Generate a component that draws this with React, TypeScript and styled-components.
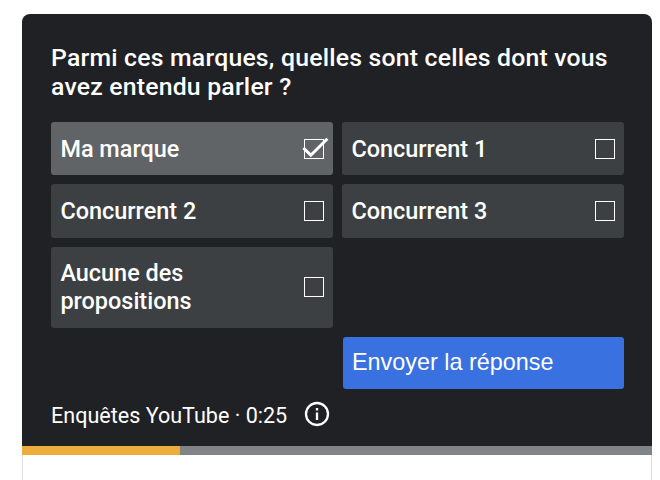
import React, { useState } from "react";
import styled, { createGlobalStyle } from "styled-components";

const GlobalStyle = createGlobalStyle`
  *, *::before, *::after { box-sizing: border-box; }
  html, body { margin: 0; height: 480px; overflow: hidden; background: #fff; }
`;

const Page = styled.main`
  width: 660px;
  height: 480px;
  padding: 14px 8px 0 22px;
  display: flex;
  flex-direction: column;
  font-family: Roboto, "Liberation Sans", sans-serif;
  color: #fff;
`;

const Card = styled.section`
  height: 432px;
  padding: 29px 28px 0 29px;
  display: flex;
  flex-direction: column;
  background: #202124;
  border-radius: 8px 8px 0 0;
`;

const Question = styled.h1`
  margin: 0;
  height: 79px;
  font-size: 24.8px;
  font-weight: 500;
  line-height: 29px;
  letter-spacing: 0.2px;
  white-space: nowrap;
`;

const Answers = styled.div`
  display: grid;
  grid-template-columns: 282px 282px;
  grid-template-rows: 53px 54px 81px 52px;
  gap: 9px;
`;

const Answer = styled.button<{ $selected: boolean; $tall: boolean }>`
  display: flex;
  align-items: center;
  justify-content: space-between;
  padding: 0 9px ${(p) => (p.$tall ? 1 : 0)}px 9.4px;
  border: 0;
  border-radius: 3px;
  background: ${(p) => (p.$selected ? "#606466" : "#3c4042")};
  color: #fff;
  font: 500 23.45px/28px Roboto, "Liberation Sans", sans-serif;
  text-align: left;
`;

const AnswerLabel = styled.span`
  white-space: pre-line;
`;

const Box = styled.span`
  position: relative;
  flex: none;
  width: 20px;
  height: 20px;
  border: 1px solid #fff;
`;

const Check = styled.svg`
  position: absolute;
  left: -3px;
  top: -3px;
  width: 28px;
  height: 24px;
`;

const Submit = styled.button`
  grid-column: 2;
  grid-row: 4;
  margin-left: 1px;
  padding: 0 9px 2px;
  border: 0;
  border-radius: 3px;
  background: #3971e0;
  color: #fff;
  font: 400 23.4px/28px "Liberation Sans", Arial, sans-serif;
  text-align: left;
`;

const Footer = styled.footer`
  display: flex;
  align-items: center;
  height: 30px;
  margin-top: 11px;
  font-size: 21.55px;
`;

const InfoIcon = styled.svg`
  width: 26px;
  height: 26px;
  margin: -3px 0 0 16.6px;
`;

const Progress = styled.div`
  height: 9px;
  background: #808486;
`;

const Elapsed = styled.div`
  width: 158px;
  height: 9px;
  background: #edad3c;
  border-radius: 0 1px 1px 0;
`;

const Below = styled.div`
  flex: 1;
  border: solid #dadce0;
  border-width: 0 1px;
`;

const answers = [
  "Ma marque",
  "Concurrent 1",
  "Concurrent 2",
  "Concurrent 3",
  "Aucune des\npropositions",
];

export default function App() {
  const [selected, setSelected] = useState(answers[0]);
  return (
    <Page>
      <GlobalStyle />
      <Card>
        <Question>
          Parmi ces marques, quelles sont celles dont vous
          <br />
          avez entendu parler ?
        </Question>
        <Answers>
          {answers.map((text) => (
            <Answer
              key={text}
              $selected={text === selected}
              $tall={text.includes("\n")}
              onClick={() => setSelected(text)}
            >
              <AnswerLabel>{text}</AnswerLabel>
              <Box>
                {text === selected && (
                  <Check viewBox="0 0 28 24" fill="none" stroke="#fff" strokeWidth="3">
                    <path d="M1.4 11 8.8 18.2 25.4 1.8" />
                  </Check>
                )}
              </Box>
            </Answer>
          ))}
          <Submit>Envoyer la réponse</Submit>
        </Answers>
        <Footer>
          Enquêtes YouTube · 0:25
          <InfoIcon viewBox="0 0 26 26" fill="none">
            <circle cx="13" cy="13" r="11" stroke="#fff" strokeWidth="2.3" />
            <path d="M13 11.5v7.5M13 7v2.4" stroke="#fff" strokeWidth="2.3" />
          </InfoIcon>
        </Footer>
      </Card>
      <Progress>
        <Elapsed />
      </Progress>
      <Below />
    </Page>
  );
}
